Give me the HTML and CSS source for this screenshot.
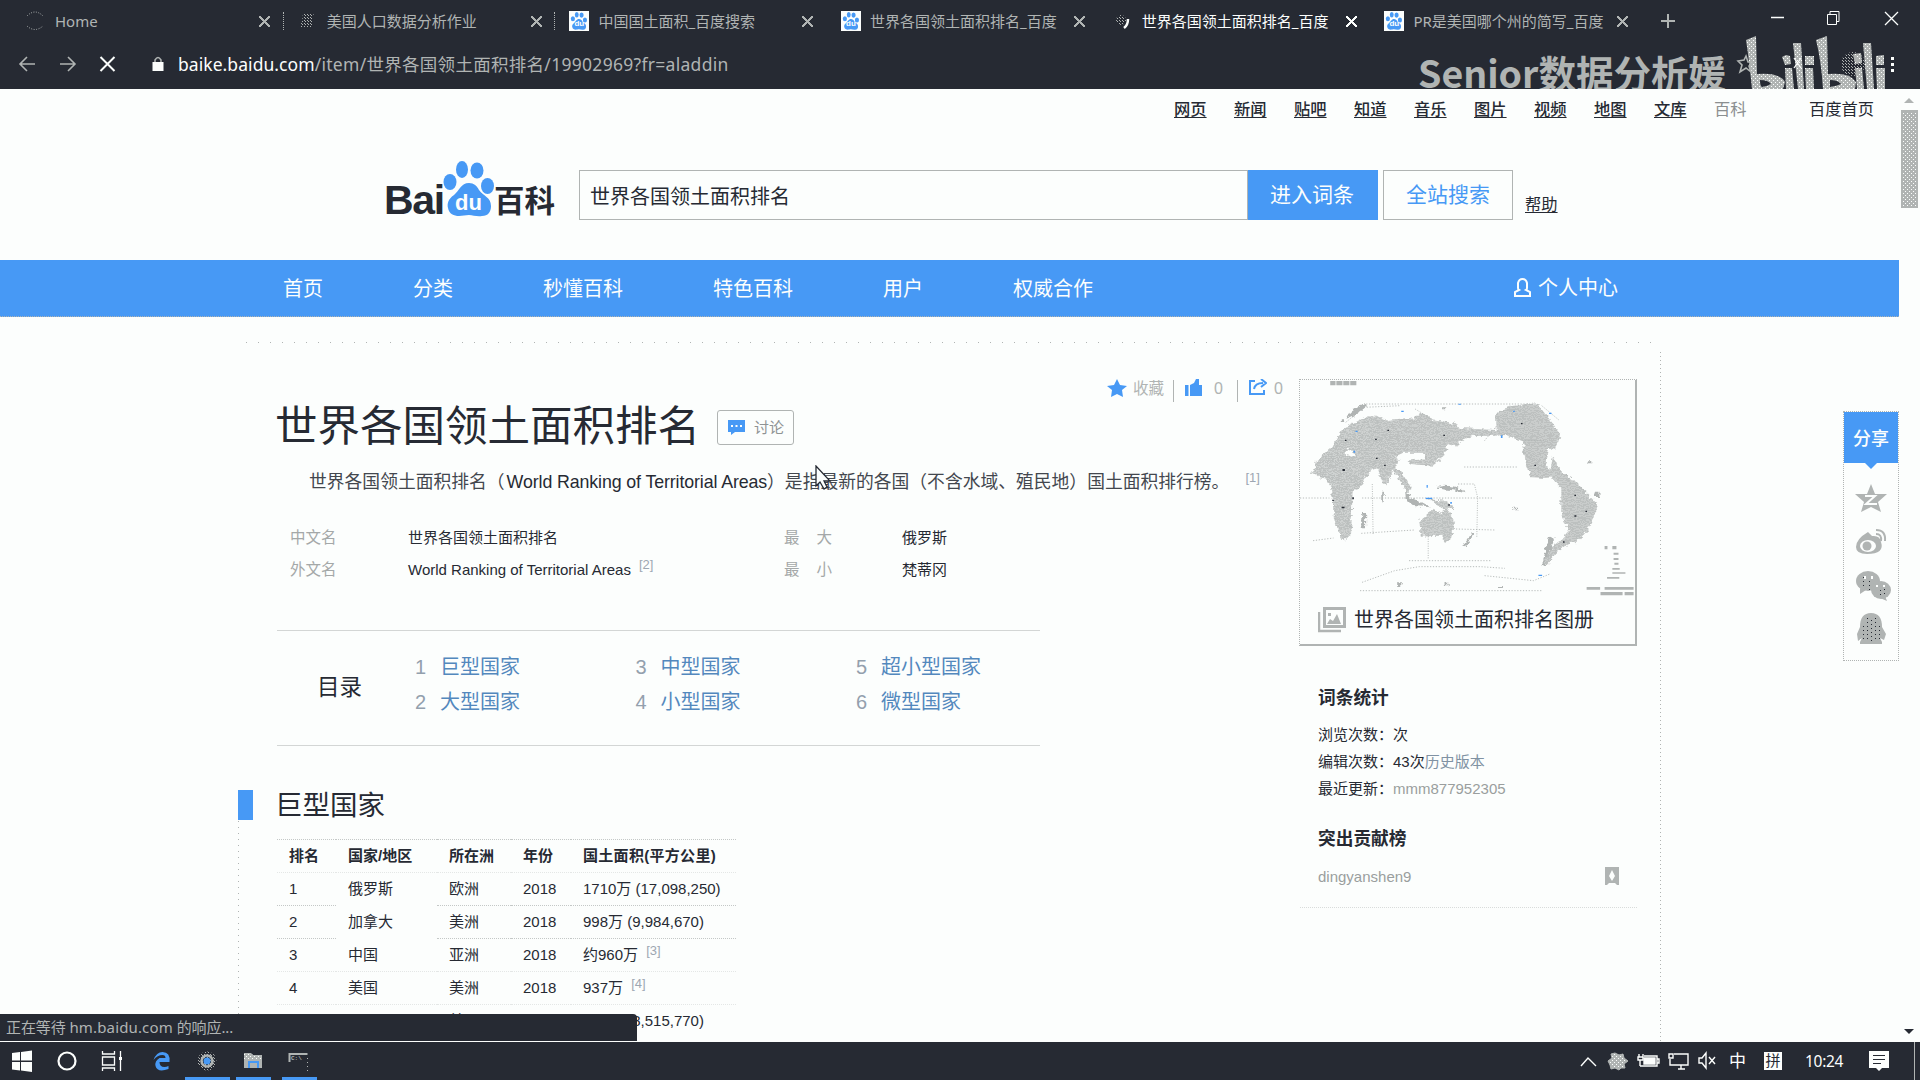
FILE: index.html
```html
<!DOCTYPE html>
<html lang="zh-CN">
<head>
<meta charset="utf-8">
<title>世界各国领土面积排名_百度百科</title>
<link rel="stylesheet" href="styles.css">
</head>
<body>
<svg class="defs" width="0" height="0">
  <defs>
    <pattern id="wm" width="4" height="4" patternUnits="userSpaceOnUse"><rect width="4" height="4" fill="#b0b4b3"/><rect width="1" height="1" fill="#fcfefd"/><rect x="2" y="2" width="1" height="1" fill="#fcfefd"/></pattern>
    <pattern id="land" width="4.9" height="6" patternUnits="userSpaceOnUse"><rect width="4.9" height="6" fill="#b0b4b3"/><rect width="2.45" height="3" fill="#fcfefd"/></pattern>
    <pattern id="noise" width="3" height="3" patternUnits="userSpaceOnUse"><rect width="1" height="1" fill="#b0b4b3"/><rect x="1" y="1" width="1" height="1" fill="#b0b4b3"/></pattern>
    <filter id="coast" x="-5%" y="-5%" width="110%" height="110%"><feTurbulence type="fractalNoise" baseFrequency="0.09" numOctaves="3" seed="4"/><feDisplacementMap in="SourceGraphic" scale="16" xChannelSelector="R" yChannelSelector="G"/></filter>
    <symbol id="paw" viewBox="0 0 52 56"><g fill="currentColor"><ellipse cx="7" cy="21" rx="6.5" ry="8"/><ellipse cx="19" cy="8.500" rx="6" ry="8.500"/><ellipse cx="34" cy="9.500" rx="6.500" ry="8"/><ellipse cx="44.500" cy="25" rx="6.500" ry="8"/><path d="M26 22c-8 0-10 8-15 12-6 4-7 9-6 13 1 6 6 8 11 8 4 0 6-1 10-1s8 2 13 1c6 0 9-4 9-10 0-9-8-10-12-16-2-4-5-7-10-7z"/></g></symbol>
  </defs>
</svg>

<header class="browser">
  <div class="tabs">
    <div class="tab"><svg class="fav" width="18" height="20"><path d="M1 5Q9-3 17 5M1 15Q9 22 17 15" fill="none" stroke="#b0b4b3" stroke-dasharray="1 1.500"/></svg><span>Home</span><i class="x"></i></div>
    <div class="tab"><svg class="fav" width="18" height="20"><path d="M5 2h11l-2 6 1 8H1l3-5z" fill="url(#noise)"/></svg><span>美国人口数据分析作业</span><i class="x"></i></div>
    <div class="tab"><b class="fav paw"><svg width="18" height="18"><use href="#paw"/></svg><em>du</em></b><span>中国国土面积_百度搜索</span><i class="x"></i></div>
    <div class="tab"><b class="fav paw"><svg width="18" height="18"><use href="#paw"/></svg><em>du</em></b><span>世界各国领土面积排名_百度</span><i class="x"></i></div>
    <div class="tab active"><svg class="fav" width="20" height="20"><circle cx="8" cy="9" r="5" fill="url(#noise)"/><path d="M15 8q0 6-4 9" fill="none" stroke="#fcfefd" stroke-width="2.500"/></svg><span>世界各国领土面积排名_百度</span><i class="x"></i></div>
    <div class="tab"><b class="fav paw"><svg width="18" height="18"><use href="#paw"/></svg><em>du</em></b><span>PR是美国哪个州的简写_百度</span><i class="x"></i></div>
    <svg class="plus" width="16" height="16"><path d="M8 1v14M1 8h14" stroke="#b0b4b3" stroke-width="2"/></svg>
    <svg class="win" width="130" height="20" fill="none" stroke="#fcfefd"><path d="M1 8.500h13M115 3l13 13M128 3l-13 13" stroke-width="1.300"/><path d="M57.500 5.500h9v10h-9zM60 5V2.500h9v10h-3" /></svg>
  </div>
  <div class="toolbar">
    <svg width="130" height="20" class="nav-icons" fill="none" stroke="#b0b4b3" stroke-width="1.600"><path d="M17 10H2M9 3l-7 7 7 7M42 10h15M50 3l7 7-7 7"/><path d="M82.500 3l14 14M96.500 3l-14 14" stroke="#fcfefd" stroke-width="2"/></svg>
    <svg width="12" height="16" class="lock"><path d="M3 7V4q3-5 6 0v3" fill="none" stroke="#b0b4b3" stroke-width="1.500"/><rect x="0.500" y="6" width="11" height="9" fill="#fcfefd"/></svg>
    <div class="url"><strong>baike.baidu.com</strong><span>/item/</span><span>世界各国领土面积排名</span><span>/19902969?fr=aladdin</span></div>
  </div>
  <div class="watermark">Senior数据分析媛</div>
  <svg class="bili" width="180" height="59">
    <g fill="url(#wm)"><path d="M15 10l10-4 1 38q22-2 28 8l-2 7H21q-3-30-6-49zM29 50q0 6 2 7 6-1 9-3-3-4-11-4z"/><path d="M62 13h8l3 46h-6zM54 38h7l2 21h-8zM74 38h8l1 21h-8zM51 27l4-2 4 1 1 8-6 1zM74 26h9v9h-9z"/><path d="M85 10l11-4 1 38q22-2 28 8l-1 7H92q-2-30-7-49zM99 50v7q7-1 11-3-3-4-11-4z"/><path d="M132 13h8l3 46h-7zM124 38h7l2 21h-7zM145 38h9v21h-8zM122 24l8-1 1 10-7 1zM145 26l8-1v10h-8z"/></g>
    <circle cx="122" cy="34" r="12" fill="url(#noise)"/><path d="M15 26l2 6h6l-5 4 2 6-5-4-6 4 2-7-4-4 6-1z" fill="none" stroke="#b0b4b3" stroke-width="1.600"/>
    <path d="M63 28l7 10M70 28l-7 10" stroke="#fcfefd" stroke-width="1.300"/><path d="M160 27h3v3h-3zM160 33h3v3h-3zM160 39h3v3h-3z" fill="#fcfefd"/>
  </svg>
</header>

<main class="viewport">
  <div class="page">
    <nav class="services"><a>网页</a><a>新闻</a><a>贴吧</a><a>知道</a><a>音乐</a><a>图片</a><a>视频</a><a>地图</a><a>文库</a><span class="cur">百科</span><span class="home">百度首页</span></nav>
    <div class="searchbar">
      <div class="logo"><span class="bai">Bai</span><b class="logo-paw"><svg width="52" height="56"><use href="#paw"/></svg><em>du</em></b><span class="ke">百科</span></div>
      <div class="input">世界各国领土面积排名</div>
      <div class="btn primary">进入词条</div>
      <div class="btn plain">全站搜索</div>
      <a class="help">帮助</a>
    </div>
    <nav class="mainnav"><span>首页</span><span>分类</span><span>秒懂百科</span><span>特色百科</span><span>用户</span><span>权威合作</span>
      <span class="me"><svg width="19" height="20" fill="none" stroke="#fcfefd" stroke-width="2"><path d="M5 10V5q1-4 4.500-4T14 5v5q0 1.500-1 2l4 2v4H2v-4l4-2q-1-.5-1-2z"/></svg>个人中心</span></nav>

    <div class="frame">
      <article>
        <div class="headrow">
          <h1>世界各国领土面积排名</h1>
          <div class="discuss"><svg width="17" height="15"><path d="M0 0h17v12H7l-4 3v-3H0z" fill="#4799f5"/><path d="M3 6h2M7.500 6h2M12 6h2" stroke="#fcfefd" stroke-width="2"/></svg>讨论</div>
          <div class="actions">
            <svg width="20" height="18"><path d="M10 0l3 6 7 1-5 4 1 7-6-3-6 3 1-7-5-4 7-1z" fill="#4799f5"/></svg><span class="fav-t">收藏</span><i></i>
            <svg class="thumb" width="17" height="18"><path d="M0 6h3.500v11H0zM5 6l4-2 2-4h3v6h3v11H5z" fill="#4799f5"/></svg><span class="n0">0</span><i></i>
            <svg class="shr" width="18" height="17" fill="none" stroke="#4799f5" stroke-width="2"><path d="M6 2H1v13h14v-4M5 10q1-6 9-6M12 0l5 4-5 4"/></svg><span class="n1">0</span>
          </div>
        </div>
        <p class="summary">世界各国领土面积排名（<span>World Ranking of Territorial Areas</span>）是指最新的各国（不含水域、殖民地）国土面积排行榜。<sup>[1]</sup></p>
        <dl class="info">
          <dt>中文名</dt><dd>世界各国领土面积排名</dd><dt class="w">最<b></b>大</dt><dd>俄罗斯</dd>
          <dt>外文名</dt><dd class="en"><span>World Ranking of Territorial Areas</span><sup>[2]</sup></dd><dt class="w">最<b></b>小</dt><dd>梵蒂冈</dd>
        </dl>
        <section class="toc">
          <h2>目录</h2>
          <ol>
            <li><i>1</i>巨型国家</li><li><i>3</i>中型国家</li><li><i>5</i>超小型国家</li>
            <li><i>2</i>大型国家</li><li><i>4</i>小型国家</li><li><i>6</i>微型国家</li>
          </ol>
        </section>
        <div class="chapter">
          <h2>巨型国家</h2>
          <table>
            <tr><th>排名</th><th>国家/地区</th><th>所在洲</th><th>年份</th><th>国土面积(平方公里)</th></tr>
            <tr class="faint"><td>1</td><td>俄罗斯</td><td>欧洲</td><td>2018</td><td>1710万 (17,098,250)</td></tr>
            <tr class="gap"><td>2</td><td>加拿大</td><td>美洲</td><td>2018</td><td>998万 (9,984,670)</td></tr>
            <tr class="gap"><td>3</td><td>中国</td><td>亚洲</td><td>2018</td><td>约960万 <sup>[3]</sup></td></tr>
            <tr class="faint"><td>4</td><td>美国</td><td>美洲</td><td>2018</td><td>937万 <sup>[4]</sup></td></tr>
            <tr class="faint"><td>5</td><td>巴西</td><td>美洲</td><td>2018</td><td>851万 (8,515,770)</td></tr>
          </table>
        </div>
      </article>

      <aside>
        <div class="album">
          <svg class="map" width="334" height="218" viewBox="48 118 818 654" preserveAspectRatio="none">
            <g fill="#b0b4b3"><path d="M122 121h13v13h-13zM137 121h15v13h-15zM154 121h15v13h-15zM171 121h15v13h-15zM750 739h33v8h-33zM794 739h71v8h-71zM784 754h54v10h-54zM843 754h22v10h-22zM794 616h7v10h-7zM813 616h10v10h-10zM816 636h12v6h-12zM816 652h12v6h-12zM818 666h10v6h-10zM813 682h18v5h-18zM813 695h32v4h-32zM800 709h30v5h-30z"/></g>
            <g fill="#b0b4b3" filter="url(#coast)"><path d="M205 187l-40 34-3 13 20-10 30-30zM148 236h8v8h-8zM247 453h6v32h-6zM198 520h12v40h-12zM470 575l-22 40 8 2 18-38zM655 590l15 4-20 80-8-4zM568 501h14v8h-14zM286 728h10v8h-10zM402 726h10v8h-10zM533 736h12v6h-12zM752 362h12v6h-12zM769 453h10v16h-10zM595 330h12v8h-12zM396 200h10v6h-10zM385 438q30-8 58 6l8 14-20-8-46-6zM305 440l12 30 30 16 20 14-40-4-20-20z"/></g>
            <g fill="url(#land)" filter="url(#coast)"><path d="M78 400l12-40 36-40 26-55 60-38 36 2 14 12 70-8 10-20 30 22 50 12 18 15 88 6 2 18-60 0-20 10-20 22-20-8-10 35-30 30-50-5-20-20-20 25 25 30 16 40-12 12-22-50-12-20-14 44-10-4-14-44-20 8-20 50-20 12-4 130-20 16-22-65-4-80-12-40-20-4-20-20z"/><path d="M530 280l-2-60 34-24 66-8 58 90-14 50-16-8-8 50 24 40-24 2-34-2-14-48-6-60-34-16z"/><path d="M618 385l40 20 10-60 20 50 40 30-20 16-20 0-30-36-32 0z"/><path d="M688 440l30-24 36 46 24 30-24 76-32 40-36-6 18-30-16-60z"/><path d="M340 540l28-28 10-8 14 14 16-16 20 44-10 50-14 10-10-20-22 0-28 2z"/><path d="M355 475l50 5 25 25-30 0-22-18z"/><path d="M655 670l-10-6 25-50 25-24 25 6-40 34z"/></g>
            <g fill="#fcfefd" filter="url(#coast)"><path d="M280 352l20-16 55 0-2 20-50 4zM160 320l18 12 4 18-22-8z"/></g>
            <g fill="none" stroke="#b0b4b3" stroke-width="2.400" stroke-dasharray="3 4"><path d="M210 190H630M640 195l44 45M48 472H120M200 472H520M195 750H640M200 725l80-35 60-12h150l60 5M500 705l120 15 40-20M198 578l130-10M430 565l95 3M450 379h130M435 430l40 0 8 40-2 120M315 660h200M225 430l2 150M362 580v76M600 300h50M500 300l40-60M160 245l45-45 90-5M330 205l40 30M700 400l10 30M80 600l50-8"/></g>
            <g fill="#262a33"><path d="M158 297h4v4h-4zM262 267h4v4h-4zM232 294h4v4h-4zM234 351h4v4h-4zM152 385h6v6h-6zM254 372h4v4h-4zM399 282h4v4h-4zM589 247h4v4h-4zM622 372h4v4h-4zM720 462h4v4h-4zM747 510h4v4h-4zM720 524h5v4h-5zM692 602h4v4h-4zM150 498h7v5h-7zM176 470h4v6h-4zM411 491h4v4h-4zM127 477h4v4h-4z"/></g>
            <g fill="#4799f5"><path d="M296 210h6v4h-6zM184 270h5v4h-5zM179 330h4v6h-4zM540 284h4v8h-4zM658 216h6v4h-6zM356 471h16v4h-16zM416 484h4v5h-4zM358 433h3v8h-3zM632 702h9v4h-9zM570 210h4v4h-4zM436 189h6v3h-6z"/></g>
          </svg>
          <div class="caption"><svg width="28" height="26"><path d="M6.500 1.500h20v18h-20z" fill="none" stroke="#b0b4b3" stroke-width="3"/><path d="M1 5v19h22" fill="none" stroke="#b0b4b3" stroke-width="2.500"/><path d="M9 17l3-5 3 2 4-7 4 10zM10 6h3v3h-3z" fill="#b0b4b3"/></svg><span>世界各国领土面积排名图册</span></div>
        </div>
        <div class="stats">
          <h3>词条统计</h3>
          <p>浏览次数：次</p><p>编辑次数：43次<a>历史版本</a></p><p>最近更新：<u>mmm877952305</u></p>
          <h3 class="second">突出贡献榜</h3>
          <div class="who"><span>dingyanshen9</span><svg width="14" height="18"><path d="M0 0h14v18H0z" fill="#b0b4b3"/><path d="M7 3l3 6-3 5-3-5zM2 18l2-2h6l2 2z" fill="#fcfefd"/></svg></div>
        </div>
      </aside>
    </div>
  </div>

  <div class="scroll"><svg width="21" height="952"><path d="M5 14l5-5 5 5z" fill="#b0b4b3"/><rect x="2" y="21" width="17" height="98" fill="#b0b4b3"/><rect x="4" y="23" width="13" height="95" fill="url(#wm)"/><path d="M5 940h10l-5 5z" fill="#262a33"/></svg></div>

  <div class="share">
    <b>分享</b>
    <svg width="54" height="197"><path d="M21 0h12l-6 6z" fill="#4799f5"/><g transform="translate(-1 0)"><g fill="#b0b4b3"><path d="M28 21l4 10h12l-9 8 3 10-10-5-10 5 3-10-9-8h12z"/><path d="M13 84q0-8 12-15l4 4q8-1 9 6 4 12-14 12-11 0-11-7z"/><path d="M33 67q10 0 9 11M33 71q6 0 5 7" fill="none" stroke="#b0b4b3" stroke-width="2"/><ellipse cx="25" cy="118" rx="12" ry="10"/><ellipse cx="38" cy="127" rx="10" ry="9"/><path d="M17 125l0 6 6-4zM42 133l2 5-7-3z"/><path d="M28 150q11 0 11 14l4 7-2 6-4-2 2 4v2H17v-2l2-4-4 3-1-7 3-7q0-14 11-14z"/></g><path d="M22 33h10l-9 8h11" fill="none" stroke="#fcfefd" stroke-width="2"/><ellipse cx="25" cy="83" rx="8" ry="6" fill="#fcfefd"/><circle cx="24" cy="83" r="4.500" fill="#b0b4b3"/><path d="M21 113h2v3h-2zM28 113h2v3h-2zM33 122h2v2h-2zM40 122h2v2h-2z" fill="#fcfefd"/><path d="M24.500 155v24M28.500 157v24M32.500 155v24M20.500 163v16M36.500 163v16M20.500 114v10M26.500 118v9M37.500 127v6M41.500 126v6" stroke="#262a33" stroke-dasharray="1 3"/></g></svg>
  </div>
  <svg class="cursor" width="18" height="26"><path d="M1 1v20l4-4 4 7 3-2-3-6h6z" fill="#fcfefd" stroke="#262a33" stroke-width="1.300"/></svg>
  <div class="status"><span>正在等待</span> <span class="host">hm.baidu.com</span> <span>的响应...</span></div>
</main>

<footer class="taskbar">
  <svg class="apps" width="330" height="38">
    <g fill="#fcfefd"><path d="M12 11l8-1v8.500h-8zM21 10l11-1.500v10H21zM12 20h8v8.500l-8-1zM21 20h11v10l-11-1.500z"/></g>
    <circle cx="67" cy="19" r="8.500" fill="none" stroke="#fcfefd" stroke-width="2.200"/>
    <path d="M102.500 9v3h12V9M102.500 15h12v8h-12zM102.500 29v-3h12v3M120.500 9v20" fill="none" stroke="#fcfefd" stroke-width="1.300"/><path d="M119 15h3v3h-3z" fill="#fcfefd"/>
    <path d="M153.500 18q3-8 9-8 8 0 7 10h-10q0 5 5 5 2 0 4-1v3q-11 4-13-3-1-5 4-8h6q0-3-3-3-5 0-9 5z" fill="#4799f5"/>
    <circle cx="207" cy="19" r="9.500" fill="url(#noise)"/><circle cx="207" cy="19" r="5.500" fill="none" stroke="#b0b4b3" stroke-width="2.500"/><circle cx="207" cy="19" r="3.500" fill="#4799f5"/>
    <path d="M244 11h7l2 2h9v13h-18z" fill="url(#wm)"/><path d="M244 18h18v8h-18z" fill="#b0b4b3"/><path d="M249 26v-6h9v6" fill="none" stroke="#4799f5" stroke-width="2"/>
    <path d="M289.500 20v-8h18" fill="none" stroke="#b0b4b3" stroke-width="2"/><path d="M307.500 16v14" stroke="#b0b4b3" stroke-dasharray="1 3"/><text x="291" y="18" class="cmd">C:\</text>
    <path d="M185 35h45v3h-45zM236 35h35v3h-35zM282 35h35v3h-35z" fill="#4799f5"/>
  </svg>
  <div class="tray">
    <svg width="140" height="26" fill="none" stroke="#fcfefd" stroke-width="1.400"><path d="M1 18l7-8 8 8"/><path d="M35 5l4 2 4-1 1 4 4 3-4 3 1 4-4 0-2 2-4-2-4 1-1-4-2-4 4-3-1-4z" fill="url(#wm)" stroke="#b0b4b3" stroke-width="1"/><path d="M64 8h13v10H60M77 11h2v4h-2M59 6v3M63 6v3M58 9h5v3h-5zM60 12v6"/><path d="M64 10h11v6H64z" fill="#fcfefd"/><path d="M94 6h14v11H90V11M98 21h7M101 17v4M89 6h4v4h-4z"/><path d="M119 10h3l4-5v15l-4-5h-3zM129 9l6 7M135 9l-6 7"/></svg>
    <span class="zh">中</span><span class="pin">拼</span><span class="clock">10:24</span>
    <svg class="note" width="20" height="21"><path d="M0 0h20v17h-7l-3 3-3-3H0z" fill="#fcfefd"/><path d="M4 4.500h12M4 8.500h12M4 12.500h8" stroke="#262a33"/></svg><i></i>
  </div>
</footer>
</body>
</html>
```
FILE: styles.css
```css
* { box-sizing: border-box; margin: 0; padding: 0; }
body { width: 1920px; height: 1080px; overflow: hidden; background: #fcfefd; color: #262a33; font-family: "Liberation Sans", "Noto Sans CJK SC", sans-serif; font-size: 15px; line-height: 20px; display: flex; flex-direction: column; }
i, em { font-style: normal; }
svg { display: block; flex: none; }
.defs { position: absolute; }

/* browser chrome */
.browser { height: 89px; flex: none; background: #262a33; color: #b0b4b3; position: relative; overflow: hidden; font-family: "Noto Sans", "Noto Sans CJK SC", sans-serif; }
.tabs { display: flex; height: 42px; padding-left: 12px; align-items: center; }
.tab { width: 271.700px; flex: none; display: flex; align-items: center; height: 18px; padding-left: 14px; border-right: 1px dotted #b0b4b3; }
.tab:nth-child(n+3) { border-color: transparent; }
.fav { width: 20px; height: 20px; margin-right: 9px; flex: none; }
.tab span { width: 194px; white-space: nowrap; height: 24px; line-height: 24px; flex: none; }
.tab.active { color: #fcfefd; }
.paw { background: #fcfefd; color: #4799f5; display: flex; align-items: center; justify-content: center; position: relative; }
.paw em { position: absolute; left: 5px; top: 8px; font: bold 8px/10px "Liberation Sans", sans-serif; color: #fcfefd; }
.x { width: 11px; height: 11px; margin-left: 10px; background: linear-gradient(45deg, transparent 43%, #b0b4b3 43% 57%, transparent 57%), linear-gradient(-45deg, transparent 43%, #b0b4b3 43% 57%, transparent 57%); }
.active .x { background: linear-gradient(45deg, transparent 43%, #fcfefd 43% 57%, transparent 57%), linear-gradient(-45deg, transparent 43%, #fcfefd 43% 57%, transparent 57%); }
.plus { margin-left: 18px; }
.win { margin-left: 94px; margin-bottom: 4px; }
.toolbar { display: flex; align-items: center; height: 44px; padding-left: 18px; }
.lock { margin-left: 4px; }
.url { margin-left: 14px; font-size: 17.500px; white-space: nowrap; line-height: 25px; display: flex; letter-spacing: .29px; }
.url strong { font-weight: 400; color: #fcfefd; letter-spacing: .06px; }
.watermark { position: absolute; left: 1418px; top: 48px; font: 700 37.500px/48px "Noto Sans CJK SC", sans-serif; color: #b0b4b3; white-space: nowrap; }
.bili { position: absolute; left: 1731px; top: 30px; }

/* page */
.viewport { height: 953px; flex: none; position: relative; display: flex; overflow: hidden; }
.page { width: 1899px; flex: none; }
.scroll { width: 21px; }
.services { display: flex; height: 40px; padding: 9px 24px 0 0; justify-content: flex-end; font-size: 16.300px; line-height: 22px; }
.services a { width: 60px; font-weight: 500; text-decoration: underline; text-underline-offset: 2px; }
.cur { width: 95px; color: #8b8f90; }
.home { width: 66px; white-space: nowrap; }
.searchbar { display: flex; height: 131px; padding: 41px 0 0 384px; }
.logo { width: 195px; display: flex; margin-top: -9px; height: 58px; font-family: "Noto Sans CJK SC", sans-serif; }
.bai { font: bold 41px/46px "Liberation Sans", sans-serif; width: 59px; padding-top: 16px; letter-spacing: -1.300px; }
.logo-paw { color: #4799f5; position: relative; width: 51px; }
.logo-paw em { position: absolute; left: 12px; top: 31px; font: bold 22px/22px "Liberation Sans", sans-serif; color: #fcfefd; }
.ke { font-size: 30.500px; font-weight: 700; line-height: 44px; padding-top: 16px; }
.input { width: 669px; height: 50px; border: 1px solid #b0b4b3; font-size: 20px; line-height: 52px; padding-left: 10px; }
.btn { height: 50px; font-size: 21px; line-height: 49px; text-align: center; width: 130px; }
.primary { background: #4799f5; color: #fcfefd; padding-right: 2px; }
.plain { margin-left: 5px; border: 1px solid #b0b4b3; color: #4799f5; line-height: 48px; }
.help { margin: 23px 0 0 12px; font-size: 16.300px; line-height: 22px; text-decoration: underline; text-underline-offset: 2px; }
.mainnav { display: flex; height: 57px; background: #4799f5; color: #fcfefd; font-size: 20px; line-height: 58px; padding-left: 283px; gap: 90px; border-bottom: 1px dotted #b0b4b3; white-space: nowrap; }
.me { display: flex; align-items: center; gap: 6px; margin-left: 330px; }
.frame { margin: 25px 0 0 238px; width: 1423px; height: 720px; display: flex; background: repeating-linear-gradient(90deg, #b0b4b3 0 1px, transparent 1px 12px) 8px 0 / 1410px 1px no-repeat, repeating-linear-gradient(#b0b4b3 0 1px, transparent 1px 4px) 1422px 10px / 1px 690px no-repeat; }
article { width: 1062px; padding-left: 39px; flex: none; }
.headrow { display: flex; margin-top: 37px; height: 79px; }
h1 { font-weight: 400; font-size: 42.500px; line-height: 60px; margin-top: 18px; width: 442px; white-space: nowrap; margin-left: -2px; flex: none; }
.discuss { width: 77px; height: 35px; margin-top: 31px; border: 1px solid #b0b4b3; border-radius: 3px; color: #8f9394; display: flex; align-items: center; padding-left: 10px; gap: 9px; flex: none; }
.actions { display: flex; margin-left: 313px; color: #b0b4b3; height: 22px; line-height: 20px; font-size: 16px; flex: none; }
.actions i { width: 1px; height: 22px; background: #b0b4b3; margin-top: 1px; }
.fav-t { font-size: 15.500px; margin: 0 9px 0 6px; }
.n0 { margin: 0 14px 0 12px; }
.thumb { margin-left: 11px; }
.shr { margin-left: 11px; }
.n1 { margin-left: 7px; }
.summary { margin: 11px 0 0 32px; font-size: 17.800px; line-height: 26px; white-space: nowrap; color: #43474e; }
.summary span { color: #262a33; letter-spacing: -.11px; margin-left: 2px; }
sup { font-size: 13px; line-height: 0; vertical-align: 6px; color: #9da7b2; margin-left: 16px; }
.info { display: grid; grid-template-columns: 118px 376px 118px 200px; margin: 27px 0 0 13px; grid-auto-rows: 32px; line-height: 32px; }
.info dt { color: #a4a8a8; font-size: 15.500px; }
.info .w b { display: inline-block; width: 17px; }
.info sup { margin-left: 8px; }
.toc { margin-top: 44px; width: 763px; height: 116px; border-top: 1px solid #d3d6d5; border-bottom: 1px solid #d3d6d5; display: flex; }
.toc h2 { font-weight: 400; font-size: 22.500px; line-height: 30px; margin: 42px 0 0 40px; width: 98px; }
.toc ol { list-style: none; display: grid; grid-template-columns: 220.500px 220.500px 150px; grid-auto-rows: 35px; line-height: 35px; padding-top: 19px; font-size: 20px; color: #5388bd; }
.toc i { display: inline-block; width: 25px; color: #93a0ad; }
.chapter { margin: 44px 0 0 -39px; height: 225px; background: repeating-linear-gradient(#b0b4b3 0 1px, transparent 1px 6px) 0 31px / 1px 200px no-repeat; }
.chapter h2 { font-weight: 400; font-size: 27.500px; line-height: 32px; height: 30px; border-left: 15px solid #4799f5; padding-left: 22px; }
table { border-collapse: collapse; table-layout: fixed; width: 459px; margin: 19px 0 0 39px; }
tr { height: 33px; }
td, th { text-align: left; border-top: 1px dotted #c4c8c7; padding: 0 0 0 12px; white-space: nowrap; line-height: 32px; }
.faint td { border-top-color: #e4e7e6; }
.gap td:nth-child(2) { border-top-color: transparent; }
th:nth-child(1) { width: 59px; } th:nth-child(2) { width: 101px; } th:nth-child(3) { width: 74px; } th:nth-child(4) { width: 60px; }
th:nth-child(5) { letter-spacing: .3px; }
td sup { margin-left: 4px; vertical-align: 5px; }

aside { width: 337px; }
.album { margin-top: 37px; height: 267px; margin-left: -1px; border: 1px dotted #b0b4b3; border-right: 2px solid #b0b4b3; border-bottom: 2px solid #b0b4b3; }
.caption { display: flex; align-items: center; padding: 5px 0 0 18px; gap: 8px; font-size: 20px; line-height: 34px; white-space: nowrap; }
.stats { height: 262px; padding: 40px 18px 0; border-bottom: 1px dotted #d9dcdb; }
.stats h3 { font-size: 17.700px; line-height: 24px; margin-bottom: 11px; }
.stats p { line-height: 27px; }
.stats a { color: #8092a3; }
.stats u { color: #9a9e9e; text-decoration: none; }
.stats .second { margin: 25px 0 16px; }
.who { display: flex; justify-content: space-between; color: #9a9e9e; }

.share { position: absolute; left: 1843px; top: 322px; width: 56px; height: 250px; border: 1px dotted #b0b4b3; }
.share b { display: block; height: 51px; background: #4799f5; color: #fcfefd; font: 500 18px/50px "Noto Sans CJK SC", sans-serif; text-align: center; }
.cursor { position: absolute; left: 815px; top: 376px; }
.status { position: absolute; left: 0; bottom: 1px; width: 637px; height: 27px; background: #262a33; color: #b0b4b3; border-radius: 0 4px 0 0; padding-left: 6px; line-height: 27px; font-family: "Noto Sans", "Noto Sans CJK SC", sans-serif; letter-spacing: -.1px; }
.host { letter-spacing: .15px; }

.taskbar { height: 38px; flex: none; background: #262a33; color: #fcfefd; display: flex; justify-content: space-between; align-items: center; font-family: "Noto Sans", "Noto Sans CJK SC", sans-serif; }
.cmd { font: bold 6px "Liberation Mono", monospace; fill: #b0b4b3; }
.tray { display: flex; align-items: center; width: 340px; }
.zh { margin-left: 9px; font-size: 17px; width: 35px; }
.pin { width: 18px; height: 18px; background: #fcfefd; color: #262a33; font-size: 15px; line-height: 17px; text-align: center; }
.clock { margin-left: 23px; width: 64px; font-size: 15.500px; letter-spacing: -.3px; }
.tray i { width: 1px; height: 38px; background: #b0b4b3; margin-left: 25px; }
```
